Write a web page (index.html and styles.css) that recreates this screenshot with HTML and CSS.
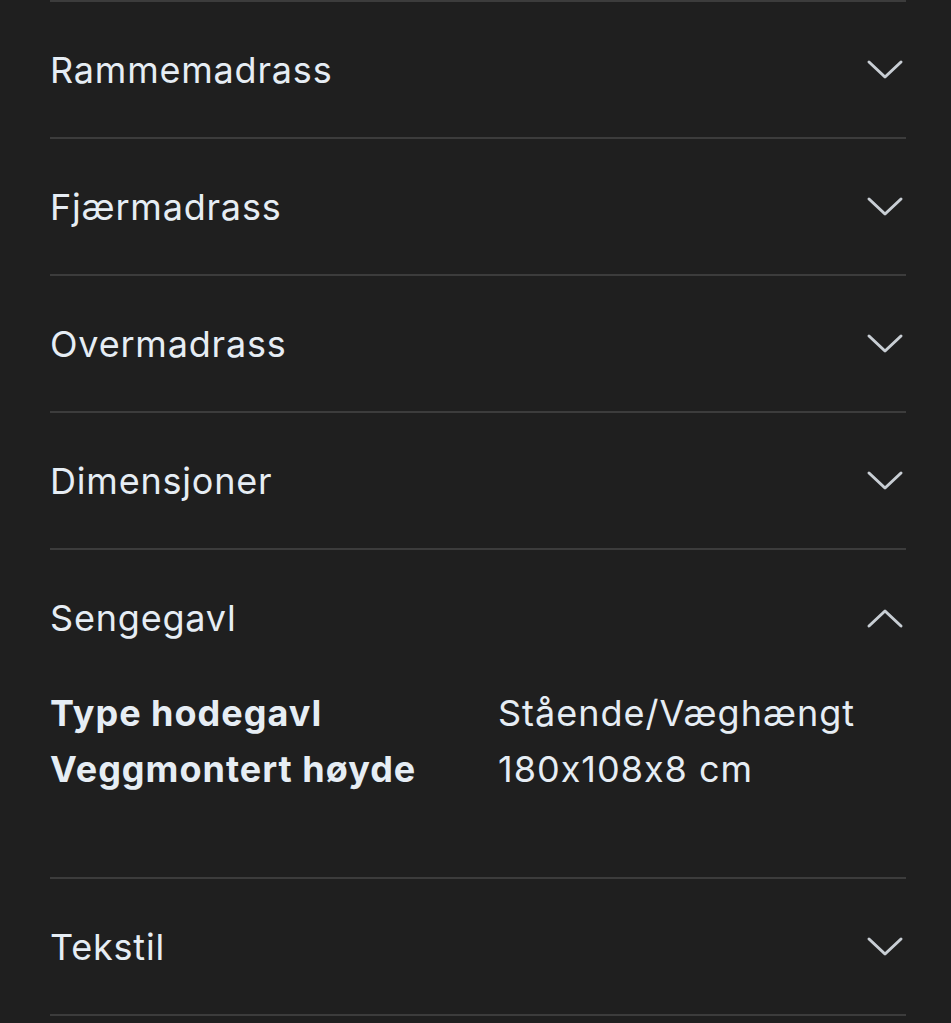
FILE: index.html
```html
<!DOCTYPE html>
<html lang="no">
<head>
    <meta charset="UTF-8">
    <meta name="viewport" content="width=device-width, initial-scale=1.0">
    <title>Produktdetaljer</title>
    <link rel="stylesheet" href="styles.css">
</head>
<body>
    <div class="container">
        <div class="accordion">
            <div class="item">
                <div class="item-header">
                    <span class="item-title">Rammemadrass</span>
                    <svg class="chevron" viewBox="0 0 38 22"><polyline points="3,3 19,18 35,3"/></svg>
                </div>
            </div>
            <div class="item">
                <div class="item-header">
                    <span class="item-title">Fjærmadrass</span>
                    <svg class="chevron" viewBox="0 0 38 22"><polyline points="3,3 19,18 35,3"/></svg>
                </div>
            </div>
            <div class="item">
                <div class="item-header">
                    <span class="item-title">Overmadrass</span>
                    <svg class="chevron" viewBox="0 0 38 22"><polyline points="3,3 19,18 35,3"/></svg>
                </div>
            </div>
            <div class="item">
                <div class="item-header">
                    <span class="item-title">Dimensjoner</span>
                    <svg class="chevron" viewBox="0 0 38 22"><polyline points="3,3 19,18 35,3"/></svg>
                </div>
            </div>
            <div class="item open">
                <div class="item-header">
                    <span class="item-title">Sengegavl</span>
                    <svg class="chevron" viewBox="0 0 38 22"><polyline points="3,19 19,4 35,19"/></svg>
                </div>
                <div class="item-body">
                    <div class="spec-row">
                        <span class="spec-label">Type hodegavl</span>
                        <span class="spec-value">Stående/Væghængt</span>
                    </div>
                    <div class="spec-row">
                        <span class="spec-label">Veggmontert høyde</span>
                        <span class="spec-value">180x108x8 cm</span>
                    </div>
                </div>
            </div>
            <div class="item">
                <div class="item-header">
                    <span class="item-title">Tekstil</span>
                    <svg class="chevron" viewBox="0 0 38 22"><polyline points="3,3 19,18 35,3"/></svg>
                </div>
            </div>
            <div class="item"></div>
        </div>
    </div>
</body>
</html>
```

FILE: styles.css
```css
body {
    font-family: Inter, "Liberation Sans", sans-serif;
    background-color: #1f1f1f;
    color: #e6edf4;
    margin: 0;
    padding: 0;
}
.container {
    padding: 0 45px 0 50px;
}
.item {
    border-top: 2px solid #3c3c3c;
}
.item-header {
    display: flex;
    align-items: center;
    justify-content: space-between;
    height: 135px;
}
.item-title {
    font-size: 36px;
    font-weight: 400;
    letter-spacing: 0.8px;
}
.chevron {
    width: 38px;
    height: 22px;
    margin-right: 2px;
    fill: none;
    stroke: #c8ced4;
    stroke-width: 3;
    stroke-linecap: round;
    stroke-linejoin: round;
}
.item-body {
    padding-bottom: 80px;
}
.spec-row {
    display: grid;
    grid-template-columns: 448px 1fr;
    height: 56px;
    align-items: center;
    font-size: 36px;
    letter-spacing: 1px;
}
.spec-label {
    font-weight: 700;
}
```
